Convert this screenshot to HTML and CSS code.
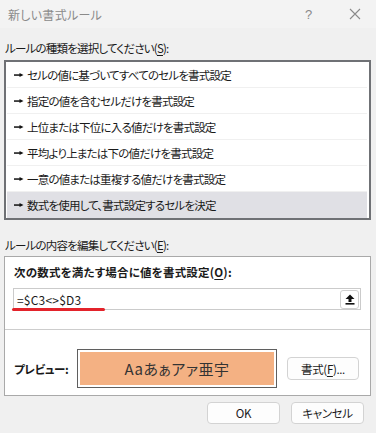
FILE: index.html
```html
<!DOCTYPE html>
<html lang="ja">
<head>
<meta charset="utf-8">
<title>新しい書式ルール</title>
<link rel="stylesheet" href="styles.css">
</head>
<body>
<div class="window">
  <div class="titlebar">
    <span class="title">新しい書式ルール</span>
    <span class="help">?</span>
    <span class="close"><svg width="12" height="12" viewBox="0 0 12 12"><path d="M1 1L11 11M11 1L1 11" stroke="#8a8a8a" stroke-width="1.1" fill="none"/></svg></span>
  </div>
  <div class="content">
    <div class="label l1">ルールの種類を選択してください(<u>S</u>):</div>
    <ul class="rules">
      <li><svg class="arrow" width="10" height="6" viewBox="0 0 10 6"><rect x="0" y="2.3" width="7" height="1.5" fill="#111"/><polygon points="5.5,1 9.5,3 5.5,5" fill="#111"/></svg>セルの値に基づいてすべてのセルを書式設定</li>
      <li><svg class="arrow" width="10" height="6" viewBox="0 0 10 6"><rect x="0" y="2.3" width="7" height="1.5" fill="#111"/><polygon points="5.5,1 9.5,3 5.5,5" fill="#111"/></svg>指定の値を含むセルだけを書式設定</li>
      <li><svg class="arrow" width="10" height="6" viewBox="0 0 10 6"><rect x="0" y="2.3" width="7" height="1.5" fill="#111"/><polygon points="5.5,1 9.5,3 5.5,5" fill="#111"/></svg>上位または下位に入る値だけを書式設定</li>
      <li><svg class="arrow" width="10" height="6" viewBox="0 0 10 6"><rect x="0" y="2.3" width="7" height="1.5" fill="#111"/><polygon points="5.5,1 9.5,3 5.5,5" fill="#111"/></svg>平均より上または下の値だけを書式設定</li>
      <li><svg class="arrow" width="10" height="6" viewBox="0 0 10 6"><rect x="0" y="2.3" width="7" height="1.5" fill="#111"/><polygon points="5.5,1 9.5,3 5.5,5" fill="#111"/></svg>一意の値または重複する値だけを書式設定</li>
      <li class="selected"><svg class="arrow" width="10" height="6" viewBox="0 0 10 6"><rect x="0" y="2.3" width="7" height="1.5" fill="#111"/><polygon points="5.5,1 9.5,3 5.5,5" fill="#111"/></svg>数式を使用して、書式設定するセルを決定</li>
    </ul>
    <div class="label l2">ルールの内容を編集してください(<u>E</u>):</div>
    <div class="editor">
      <div class="formula-label">次の数式を満たす場合に値を書式設定(<u>O</u>):</div>
      <div class="formula-wrap">
        <div class="formula-input">
          <span class="formula-text">=$C3&lt;&gt;$D3</span>
          <span class="collapse"><svg width="10" height="11" viewBox="0 0 10 11"><polygon points="5,0.5 9.5,5 6.5,5 6.5,8 3.5,8 3.5,5 0.5,5" fill="#111"/><rect x="0.5" y="9" width="9" height="1.6" fill="#111"/></svg></span>
        </div>
        <div class="redline"></div>
      </div>
      <div class="sep"></div>
      <div class="preview-row">
        <span class="preview-label">プレビュー:</span>
        <div class="preview"><div class="preview-fill">Aaあぁアァ亜宇</div></div>
        <span class="btn fmt">書式(<u>F</u>)...</span>
      </div>
    </div>
    <div class="actions">
      <span class="btn ok">OK</span>
      <span class="btn cancel">キャンセル</span>
    </div>
  </div>
</div>
</body>
</html>
```
FILE: styles.css
```css
* { box-sizing: border-box; }
html, body { margin: 0; padding: 0; }
body {
  width: 376px;
  height: 433px;
  overflow: hidden;
  background: #f0f0f0;
  font-family: "Noto Sans CJK JP", "Noto Sans", sans-serif;
  font-feature-settings: "palt";
  font-size: 11.5px;
  letter-spacing: -0.35px;
  color: #1a1a1a;
}
.window { width: 376px; height: 433px; display: flex; flex-direction: column; }
.titlebar {
  height: 28px;
  background: #f3f3f3;
  display: flex;
  align-items: center;
  padding-left: 8px;
  flex: none;
}
.title { color: #8a8a8a; font-size: 12px; letter-spacing: 0.3px; flex: 1; }
.help { color: #8a8a8a; font-size: 13px; width: 14px; margin-right: 30px; font-family: "Liberation Sans", sans-serif; }
.close { width: 12px; height: 12px; margin-right: 15px; display: flex; }
.content { padding: 0 5px 0 4px; display: flex; flex-direction: column; }
.label { line-height: 16px; height: 16px; letter-spacing: -0.8px; }
.label u, .formula-label u, .btn u { text-underline-offset: 2px; }
.l1 { margin-top: 12px; margin-left: 1px; }
.rules {
  list-style: none;
  margin: 4px 0 0;
  padding: 0;
  height: 160px;
  border: 2px solid #6f7175;
  background: #fff;
}
.rules li {
  height: 26px;
  border-bottom: 1px solid #f0f0f0;
  display: flex;
  align-items: center;
  padding-left: 7px;
  margin-right: 2px;
  margin-left: 1px;
  letter-spacing: -0.8px;
}
.rules li:last-child { border-bottom: none; }
.rules li.selected { background: #e0e0e5; }
.arrow { margin-right: 3px; flex: none; }
.l2 { margin-top: 17px; margin-left: 1px; }
.editor {
  margin-top: 3px;
  border: 1px solid #a9a9a9;
  background: #fff;
  height: 140px;
  display: flex;
  flex-direction: column;
}
.formula-label {
  margin: 7px 0 0 9px;
  line-height: 16px;
  font-weight: bold;
  letter-spacing: 0.2px;
}
.formula-wrap { position: relative; margin: 8px 9px 0 8px; }
.formula-input {
  height: 22px;
  border: 1px solid #cbcbcb;
  display: flex;
  align-items: center;
  padding-left: 3px;
}
.formula-text { flex: 1; font-size: 12px; letter-spacing: 0.2px; }
.collapse {
  width: 19px;
  height: 19px;
  border: 1px solid #cfcfcf;
  border-radius: 3px;
  display: flex;
  align-items: center;
  justify-content: center;
  margin-right: 1px;
  background: #fff;
}
.redline {
  position: absolute;
  left: -1px;
  top: 20px;
  width: 93px;
  height: 3px;
  border-radius: 2px;
  background: #e3232b;
}
.sep { margin-top: 19px; height: 1px; background: #cdcdcd; }
.preview-row {
  margin: 19px 0 0 9px;
  display: flex;
  align-items: center;
}
.preview-label { font-weight: bold; width: 63px; }
.preview {
  width: 200px;
  height: 39px;
  border: 1px solid #5f5f5f;
  padding: 2px;
  background: #fff;
}
.preview-fill {
  height: 100%;
  background: #f4b183;
  display: flex;
  align-items: center;
  justify-content: center;
  font-size: 15px;
  letter-spacing: 0.5px;
  color: #333;
}
.btn {
  display: flex;
  align-items: center;
  justify-content: center;
  background: #fdfdfd;
  border: 1px solid #d3d3d3;
  border-radius: 4px;
}
.fmt { width: 72px; height: 23px; margin-left: 10px; }
.actions { display: flex; justify-content: flex-end; margin-top: 6px; padding-right: 7px; gap: 11px; }
.ok, .cancel { width: 73px; height: 22px; }
```
